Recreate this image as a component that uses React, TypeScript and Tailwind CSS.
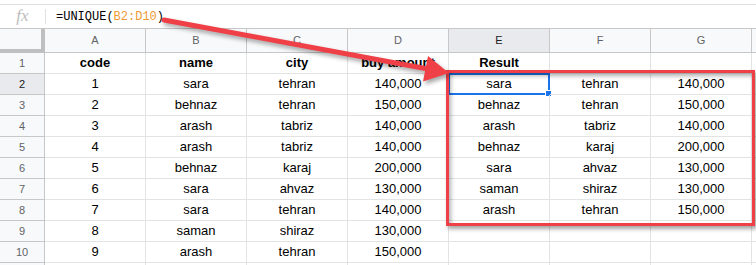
import React from "react";

const data: string[][] = [
  ["code", "name", "city", "buy amount", "Result", "", ""],
  ["1", "sara", "tehran", "140,000", "sara", "tehran", "140,000"],
  ["2", "behnaz", "tehran", "150,000", "behnaz", "tehran", "150,000"],
  ["3", "arash", "tabriz", "140,000", "arash", "tabriz", "140,000"],
  ["4", "arash", "tabriz", "140,000", "behnaz", "karaj", "200,000"],
  ["5", "behnaz", "karaj", "200,000", "sara", "ahvaz", "130,000"],
  ["6", "sara", "ahvaz", "130,000", "saman", "shiraz", "130,000"],
  ["7", "sara", "tehran", "140,000", "arash", "tehran", "150,000"],
  ["8", "saman", "shiraz", "130,000", "", "", ""],
  ["9", "arash", "tehran", "150,000", "", "", ""],
  ["", "", "", "", "", "", ""],
];

const cols = ["A", "B", "C", "D", "E", "F", "G"];

export default function App() {
  return (
    <div className="relative w-[756px] h-[265px] overflow-hidden bg-white font-['Liberation_Sans',Arial,sans-serif]">
      {/* toolbar edge */}
      <div className="h-[5px] border-b border-[#e0e0e0]" />
      {/* formula bar */}
      <div className="h-[23px] flex items-center">
        <div className="w-[45px] flex items-center justify-center">
          <span className="font-['Liberation_Serif',serif] italic text-[17px] leading-none text-[#bdbdbd] -mt-[3px]">
            fx
          </span>
        </div>
        <div className="w-px h-[15px] bg-[#e0e0e0]" />
        <div className="pl-[10px] font-['Liberation_Mono',monospace] text-[12px] text-black leading-none">
          =UNIQUE(<span className="text-[#f09a37]">B2:D10</span>)
        </div>
      </div>
      {/* grid */}
      <div className="grid grid-cols-[45px_repeat(7,101px)_1fr] border-t border-[#c7c7c7]">
        {/* header row */}
        <div className="h-[24px] bg-[#f8f9fa] border-r-4 border-b-4 border-[#bfbfbf]" />
        {cols.map((c) => (
          <div
            key={c}
            className={`h-[24px] flex items-center justify-center text-[11px] border-r border-b border-[#c7c7c7] ${
              c === "E" ? "bg-[#e8eaed] text-[#202124]" : "bg-[#f8f9fa] text-[#5f6368]"
            }`}
          >
            {c}
          </div>
        ))}
        <div className="h-[24px] bg-[#f8f9fa] border-b border-[#c7c7c7]" />
        {data.map((row, r) => (
          <React.Fragment key={r}>
            <div
              className={`h-[21px] flex items-center justify-center text-[11px] border-r border-b border-[#c7c7c7] ${
                r === 1 ? "bg-[#e8eaed] text-[#202124]" : "bg-[#f8f9fa] text-[#5f6368]"
              }`}
            >
              {r < 10 ? r + 1 : ""}
            </div>
            {row.map((v, c) => (
              <div
                key={c}
                className={`relative h-[21px] flex items-center justify-center text-[13px] text-black border-r border-b border-[#e2e3e3] ${
                  r === 0 ? "font-bold" : ""
                }`}
              >
                {v}
                {r === 1 && c === 4 && (
                  <div className="absolute -left-px -top-px w-[102px] h-[22px] border-2 border-[#1a73e8]">
                    <div className="absolute -right-[4px] -bottom-[4px] w-[7px] h-[7px] bg-[#1a73e8] border border-white" />
                  </div>
                )}
              </div>
            ))}
            <div className="h-[21px] border-b border-[#e2e3e3]" />
          </React.Fragment>
        ))}
      </div>

      {/* red highlight frame */}
      <div className="absolute left-[446px] top-[70px] w-[309px] h-[156px] border-[3px] border-[#ef4047] shadow-[2px_3px_4px_rgba(0,0,0,0.35),inset_2px_3px_4px_rgba(0,0,0,0.3)]" />

      {/* red arrow */}
      <svg
        className="absolute left-0 top-0 pointer-events-none drop-shadow-[2px_3px_2px_rgba(0,0,0,0.35)]"
        width="756"
        height="265"
        viewBox="0 0 756 265"
      >
        <line x1="164" y1="20" x2="428" y2="69" stroke="#ef4047" strokeWidth="5" strokeLinecap="round" />
        <polygon points="449,73 423,81.5 428,56" fill="#ef4047" />
      </svg>
    </div>
  );
}
